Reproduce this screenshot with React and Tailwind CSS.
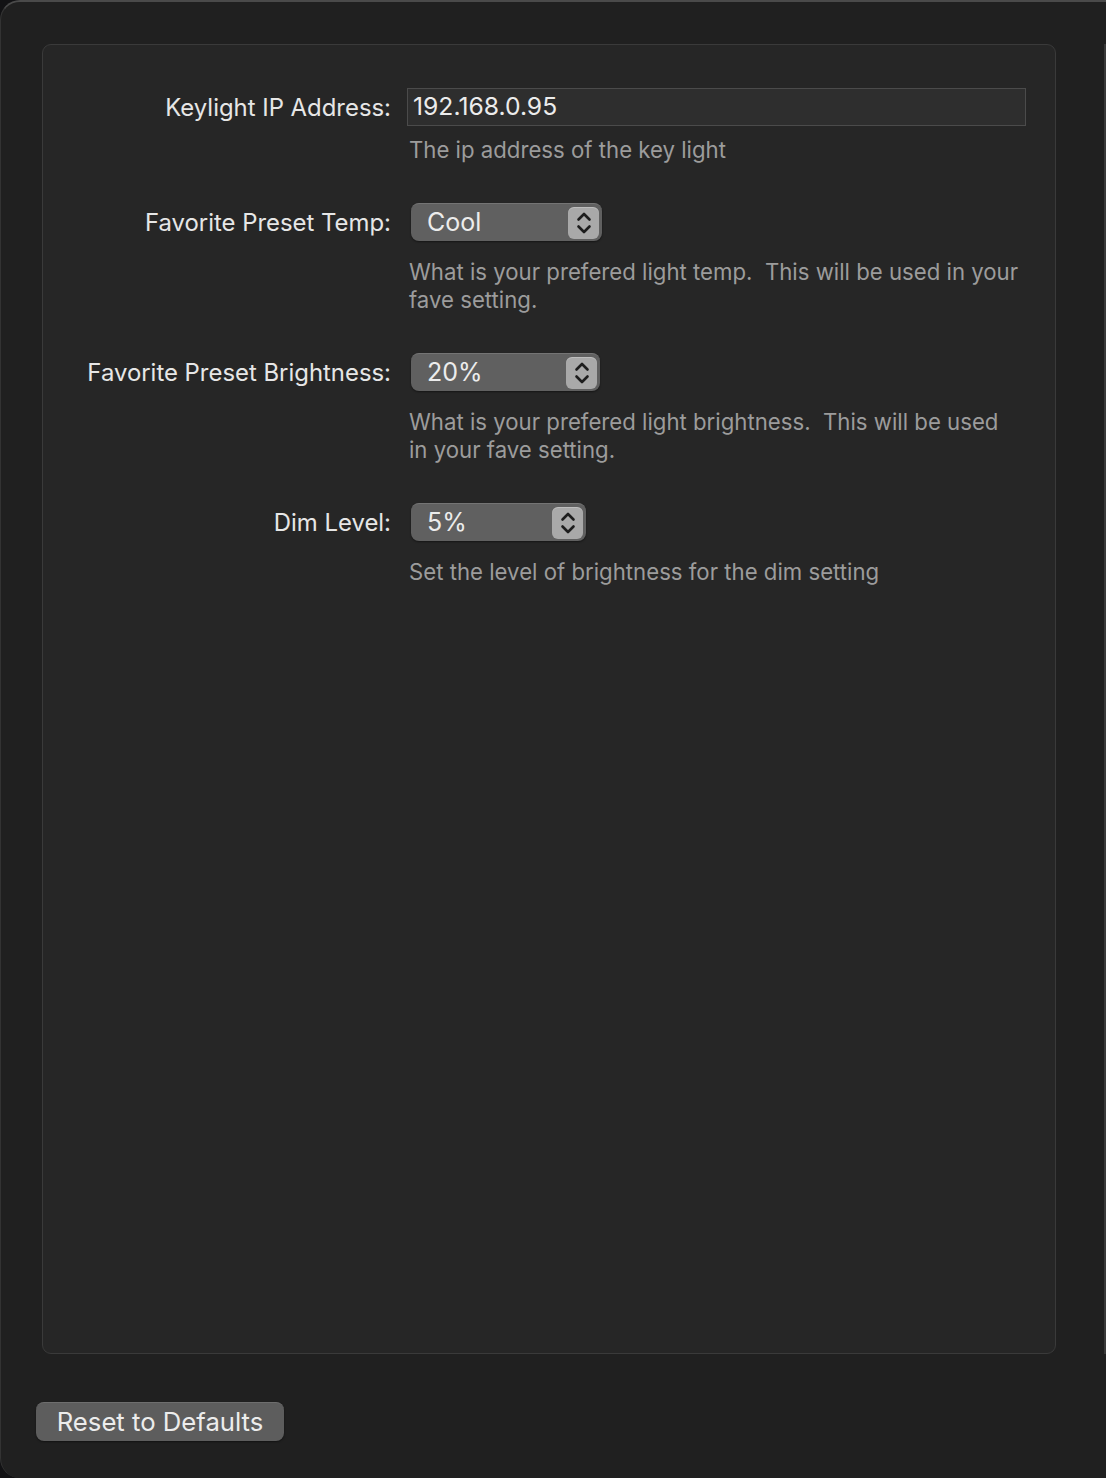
import React from 'react';

const font = { fontFamily: 'Inter, "Noto Sans", "Liberation Sans", sans-serif' };

function Stepper() {
  return (
    <span className="flex h-[32px] w-[31px] items-center justify-center rounded-[6px] bg-[#a9a9a9] shadow-[inset_0_1px_0_rgba(255,255,255,0.25)]">
      <svg width="18" height="28" viewBox="0 0 18 28" fill="none" stroke="#1d1d1d" strokeWidth="2.6" strokeLinecap="round" strokeLinejoin="round">
        <path d="M3.5 10.5 L9 5 L14.5 10.5" />
        <path d="M3.5 17.5 L9 23 L14.5 17.5" />
      </svg>
    </span>
  );
}

function Select({ value, width }) {
  return (
    <div
      className={`ml-[4px] flex h-[38px] items-center justify-between rounded-[8px] border-t border-t-[#747474] bg-[#606060] pl-[16px] pr-[3px] shadow-[0_1px_2px_rgba(0,0,0,0.45)] ${width}`}
    >
      <span className="text-[25px] leading-none text-[#ececec]">{value}</span>
      <Stepper />
    </div>
  );
}

function Row({ label, children, help, top, helpTop }) {
  return (
    <div className={`grid grid-cols-[348px_1fr] gap-x-[16px] ${top}`}>
      <div className="flex h-[38px] items-center justify-end pt-[1px] text-[23.9px] text-[#e6e6e6]">{label}</div>
      <div>{children}</div>
      <div />
      <div className={`ml-[2px] text-[22.2px] leading-[28px] text-[#9c9c9c] whitespace-pre-wrap ${helpTop}`}>{help}</div>
    </div>
  );
}

export default function App() {
  return (
    <div className="h-[1478px] w-[1106px] bg-[#121214]" style={font}>
      <div className="flex h-full flex-col rounded-l-[20px] border-l border-t-2 border-l-[#333] border-t-[#4a4a4a] bg-[#202020]">
        <div className="mt-[42px] flex">
          <div className="ml-[41px] h-[1310px] w-[1014px] rounded-[9px] border border-[#3a3a3a] bg-[#262626] pt-[43px]">
            <Row
              label="Keylight IP Address:"
              help="The ip address of the key light"
              top="mt-0"
              helpTop="mt-[10px]"
            >
              <div className="flex h-[38px] w-[619px] items-center border border-[#4b4b4b] bg-[#2e2e2e] pl-[5px] text-[24.7px] text-[#ececec]">
                192.168.0.95
              </div>
            </Row>
            <Row
              label="Favorite Preset Temp:"
              help={'What is your prefered light temp.  This will be used in your\nfave setting.'}
              top="mt-[39px]"
              helpTop="mt-[17px]"
            >
              <Select value="Cool" width="w-[191px]" />
            </Row>
            <Row
              label="Favorite Preset Brightness:"
              help={'What is your prefered light brightness.  This will be used\nin your fave setting.'}
              top="mt-[39px]"
              helpTop="mt-[17px]"
            >
              <Select value="20%" width="w-[189px]" />
            </Row>
            <Row
              label="Dim Level:"
              help="Set the level of brightness for the dim setting"
              top="mt-[39px]"
              helpTop="mt-[17px]"
            >
              <Select value="5%" width="w-[175px]" />
            </Row>
          </div>
          <div className="ml-auto h-[1310px] w-[2px] bg-[#3a3a3a]" />
        </div>
        <div className="ml-[35px] mt-[48px]">
          <button className="h-[39px] w-[248px] rounded-[8px] border-t border-t-[#6e6e6e] bg-[#5d5d5d] text-[25.7px] text-[#ececec] shadow-[0_1px_2px_rgba(0,0,0,0.45)]">
            Reset to Defaults
          </button>
        </div>
      </div>
    </div>
  );
}
